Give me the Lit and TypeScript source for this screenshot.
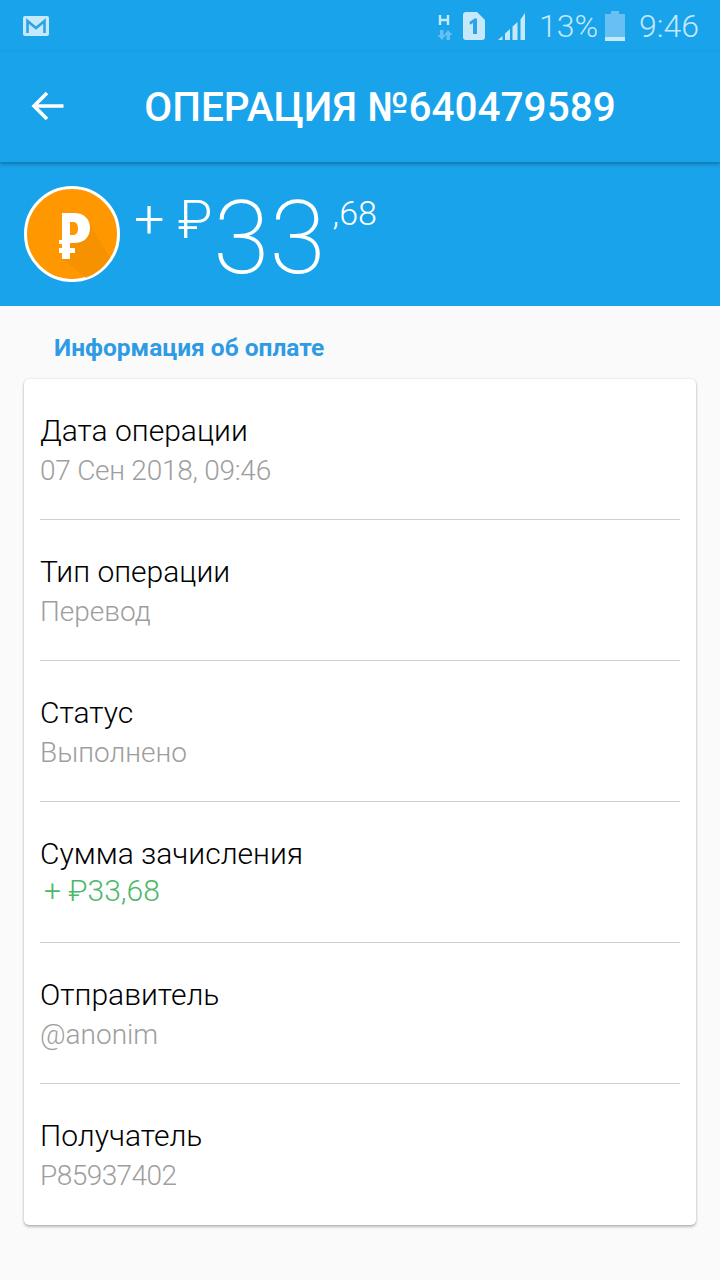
import { LitElement, html, css, svg } from 'lit';
import { customElement } from 'lit/decorators.js';

type InfoRow = {
  label: string;
  value: string;
  modifier?: string;
};

const ROWS: InfoRow[] = [
  { label: 'Дата операции', value: '07 Сен 2018, 09:46', modifier: 'row__value--date' },
  { label: 'Тип операции', value: 'Перевод' },
  { label: 'Статус', value: 'Выполнено' },
  { label: 'Сумма зачисления', value: '+ ₽33,68', modifier: 'row__value--positive' },
  { label: 'Отправитель', value: '@anonim' },
  { label: 'Получатель', value: 'P85937402', modifier: 'row__value--id' },
];

const mailIcon = svg`<svg class="mail" width="26" height="20" viewBox="0 0 26 20">
  <rect x="0" y="0" width="26" height="20" rx="2" fill="#c5e8fb"/>
  <path d="M4.500 17V5l8.500 7 8.500-7v12" fill="none" stroke="#2ba3ea" stroke-width="2.600"/>
</svg>`;

const networkIcon = svg`<svg width="16" height="28" viewBox="0 0 16 28">
  <path d="M3 3v10M11 3v10M3 8h8" fill="none" stroke="#c5e8fb" stroke-width="2.400"/>
  <path d="M5 28l-4.500-5H3v-5h3.500v5H8.800z" fill="#68bff2"/>
  <path d="M11 18l4.500 5H13v5H9.500v-5H7z" fill="#68bff2"/>
</svg>`;

const simIcon = svg`<svg width="22" height="28" viewBox="0 0 22 28">
  <path d="M3 0h11l8 8v17a3 3 0 0 1-3 3H3a3 3 0 0 1-3-3V3a3 3 0 0 1 3-3z" fill="#c5e8fb"/>
  <path d="M6.500 10l5-3.500h2.500V22h-4V11l-3 1.800z" fill="#2ba3ea"/>
</svg>`;

const signalIcon = svg`<svg width="28" height="28" viewBox="0 0 28 28">
  <path d="M0 28l4.500-4v4zM7 21.500l5-4.500v11H7zM14.500 14.500l5-4.500v18h-5zM22.500 7.500L27 1v27h-4.500z" fill="#c5e8fb"/>
</svg>`;

const batteryIcon = svg`<svg width="20" height="30" viewBox="0 0 20 30">
  <path d="M6 0h8v3h6v27H0V3h6z" fill="#68bff2"/>
  <rect x="0" y="26" width="20" height="4" fill="#c5e8fb"/>
</svg>`;

const backIcon = svg`<svg class="back" width="34" height="30" viewBox="0 0 34 30">
  <path d="M32.500 15H2.500M16 2L3 15l13 13" fill="none" stroke="#fff" stroke-width="3.600"/>
</svg>`;

const coinIcon = svg`<svg width="96" height="96" viewBox="0 0 96 96">
  <circle cx="48" cy="48" r="46.500" fill="#ff9800" stroke="#fff" stroke-width="3"/>
  <path d="M62 32L86 72A46 46 0 0 1 62 92L38 73z" fill="#f28f00" opacity=".7"/>
  <path fill-rule="evenodd" fill="#fff" d="M38 27h12c10 0 16 6 16 15s-6 15-16 15h-4v5h5v5h-5v6h-8v-6h-3v-5h3v-4h-3v-4h3zM46 36v13h3c3.500 0 5-2.500 5-6.500s-1.500-6.500-5-6.500z"/>
</svg>`;

@customElement('app-root')
class AppRoot extends LitElement {
  static styles = css`
    :host {
      display: block;
      width: 720px;
      height: 1280px;
      background: #fafafa;
      font-family: Roboto, 'Liberation Sans', sans-serif;
      overflow: hidden;
    }

    .top {
      background: #18a3eb;
      color: #fff;
    }

    .status {
      height: 52px;
      padding: 0 21px 0 23px;
      display: flex;
      align-items: center;
      color: #c5e8fb;
    }

    .status__right {
      margin-left: auto;
      display: flex;
      align-items: center;
    }

    .status__net {
      margin-right: 10px;
    }

    .status__sim {
      margin-right: 13px;
    }

    .status__signal {
      margin-right: 13px;
    }

    .status__pct {
      font-size: 32px;
      font-weight: 300;
      margin-right: 7px;
    }

    .status__time {
      font-size: 32px;
      font-weight: 300;
      margin-left: 14px;
    }

    .status svg {
      display: block;
    }

    .bar {
      height: 110px;
      display: flex;
      align-items: center;
      padding-left: 31px;
      box-shadow: 0 2px 4px rgba(0, 0, 0, 0.3);
      position: relative;
    }

    .bar svg {
      display: block;
    }

    .back {
      margin-bottom: 3px;
    }

    .bar__title {
      flex: 1;
      text-align: center;
      font-size: 40.5px;
      font-weight: 500;
      padding-right: 25px;
      white-space: nowrap;
    }

    .amount {
      height: 144px;
      display: flex;
      align-items: flex-start;
      padding: 24px 0 0 24px;
      box-sizing: border-box;
    }

    .amount svg {
      display: block;
    }

    .amount__sign {
      font-size: 54px;
      font-weight: 300;
      line-height: 68px;
      margin-left: 14px;
    }

    .amount__int {
      font-size: 102px;
      font-weight: 200;
      line-height: 104px;
      margin-left: 1px;
    }

    .amount__frac {
      font-size: 34px;
      font-weight: 300;
      line-height: 54px;
      margin-left: 7px;
    }

    .section {
      padding: 27px 54px 0;
      height: 73px;
      box-sizing: border-box;
      font-size: 24.5px;
      font-weight: 700;
      line-height: 30px;
      color: #2f9be4;
    }

    .card {
      margin: 0 24px;
      background: #fff;
      border-radius: 5px;
      box-shadow: 0 2px 3px rgba(0, 0, 0, 0.25), 0 0 2px rgba(0, 0, 0, 0.15);
      padding: 0 16px;
    }

    .row {
      height: 141px;
      box-sizing: border-box;
      padding-top: 33px;
      border-bottom: 1px solid #cfcfcf;
    }

    .row:last-child {
      border-bottom: none;
    }

    .row__label {
      font-size: 30px;
      font-weight: 300;
      line-height: 38px;
      color: #000;
    }

    .row__value {
      font-size: 28px;
      font-weight: 300;
      line-height: 42px;
      color: #9e9e9e;
    }

    .row__value--date {
      letter-spacing: -0.25px;
    }

    .row__value--id {
      letter-spacing: -0.55px;
    }

    .row__value--positive {
      font-size: 30px;
      line-height: 36px;
      color: #4cb768;
      padding-left: 4px;
    }
  `;

  render() {
    return html`
      <div class="top">
        <div class="status">
          ${mailIcon}
          <div class="status__right">
            <span class="status__net">${networkIcon}</span>
            <span class="status__sim">${simIcon}</span>
            <span class="status__signal">${signalIcon}</span>
            <span class="status__pct">13%</span>
            ${batteryIcon}
            <span class="status__time">9:46</span>
          </div>
        </div>
        <div class="bar">
          ${backIcon}
          <div class="bar__title">ОПЕРАЦИЯ №640479589</div>
        </div>
        <div class="amount">
          ${coinIcon}
          <span class="amount__sign">+ ₽</span>
          <span class="amount__int">33</span>
          <span class="amount__frac">,68</span>
        </div>
      </div>
      <div class="section">Информация об оплате</div>
      <div class="card">
        ${ROWS.map(
          (row) => html`
            <div class="row">
              <div class="row__label">${row.label}</div>
              <div class="row__value ${row.modifier ?? ''}">${row.value}</div>
            </div>
          `,
        )}
      </div>
    `;
  }
}
